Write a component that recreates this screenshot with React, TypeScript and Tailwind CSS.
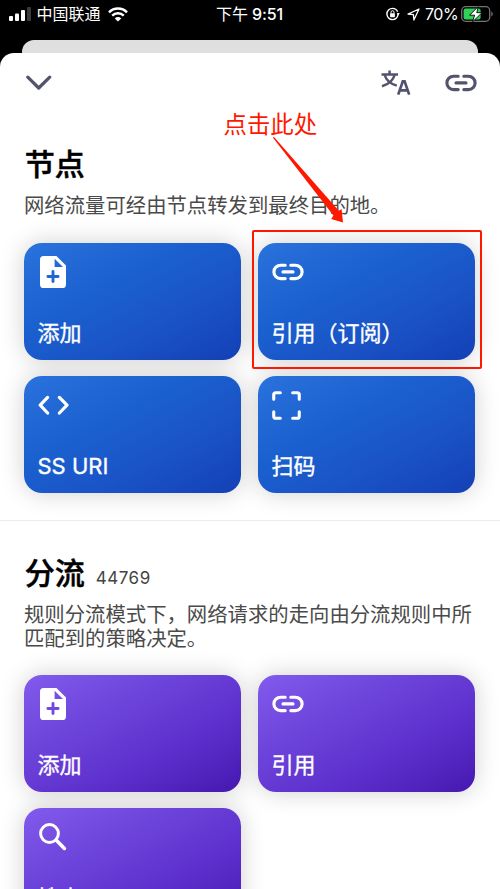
import type { ReactNode } from "react";

const sans = "font-['Inter','Noto_Sans_CJK_SC',sans-serif]";

function LinkIcon({ className }: { className: string }) {
  return (
    <svg viewBox="0 0 32 18" fill="none" stroke="currentColor" strokeWidth="3.1" strokeLinecap="round" className={className}>
      <path d="M13.2 2.2H8.6a6.7 6.7 0 0 0 0 13.4h4.6M18.8 2.2h4.6a6.7 6.7 0 0 1 0 13.4h-4.6M11 8.9h10" />
    </svg>
  );
}

function FileAddIcon({ plus }: { plus: string }) {
  return (
    <svg viewBox="0 0 26 32" className="ml-[2px] h-[32px] w-[26px]">
      <path
        fill="currentColor"
        fillRule="evenodd"
        d="M3.6 0H16.4L26 9.6V28.4Q26 32 22.4 32H3.6Q0 32 0 28.4V3.6Q0 0 3.6 0ZM14.6 2.8V11H23Z"
      />
      <path d="M13 15.4v10.2M7.9 20.5h10.2" className={plus} strokeWidth="2.9" strokeLinecap="round" />
    </svg>
  );
}

function CodeIcon() {
  return (
    <svg viewBox="0 0 32 20" fill="none" stroke="currentColor" strokeWidth="3.2" strokeLinecap="round" strokeLinejoin="round" className="h-[20px] w-[32px]">
      <path d="M9.6 2.4L2.2 10.2l7.4 7.8M21.4 2.4l7.6 7.8-7.6 7.8" />
    </svg>
  );
}

function ScanIcon() {
  return (
    <svg viewBox="0 0 30 30" fill="none" stroke="currentColor" strokeWidth="3.2" strokeLinecap="round" className="mt-px h-[29px] w-[29px]">
      <path d="M1.8 8.6V4Q1.8 1.8 4 1.8H8.6M21.4 1.8H26Q28.2 1.8 28.2 4V8.6M28.2 21.4V26Q28.2 28.2 26 28.2H21.4M8.6 28.2H4Q1.8 28.2 1.8 26V21.4" />
    </svg>
  );
}

function SearchIcon() {
  return (
    <svg viewBox="0 0 28 28" fill="none" stroke="currentColor" strokeLinecap="round" className="ml-[1px] h-[28px] w-[28px]">
      <circle cx="10.5" cy="10.5" r="8.9" strokeWidth="3" />
      <path d="M17.6 17.6L25.4 25.4" strokeWidth="3.6" />
    </svg>
  );
}

function TranslateIcon() {
  return (
    <svg viewBox="0 0 30 26" fill="none" stroke="currentColor" strokeWidth="2.5" className="h-[26px] w-[30px]">
      <path d="M.5 4.6H17M8.6.6V4.6M3.7 5C5.1 10 9.2 13.8 15.8 15.6M13.6 5C12.2 10 8.1 14.2 1 16.2" />
      <path d="M17.2 24.6L21.8 11.4H23.6L28.2 24.6M18.7 20.4H26.7" strokeWidth="2.7" />
    </svg>
  );
}

function StatusBar() {
  return (
    <header className="flex h-[40px] shrink-0 items-start text-[16px] leading-[28px] text-white">
      <div className="flex h-[28px] w-[216px] items-center pl-[9px]">
        <svg viewBox="0 0 22 14" className="h-[14px] w-[22px]" fill="currentColor">
          <rect x="0" y="9" width="4" height="5" rx="1" />
          <rect x="6" y="6.5" width="4" height="7.5" rx="1" />
          <rect x="12" y="3" width="4" height="11" rx="1" />
          <rect x="18" y="0" width="4" height="14" rx="1" fill="#3b3b3b" />
        </svg>
        <span className="-mt-[2px] ml-[5.5px] w-[65.5px] font-['Noto_Sans_CJK_SC',sans-serif]">中国联通</span>
        <svg viewBox="0 0 20 15" className="ml-[6px] h-[15px] w-[20px]" fill="none" stroke="currentColor">
          <path d="M1 5.4A12.6 12.6 0 0 1 19 5.4" strokeWidth="2.5" />
          <path d="M4.2 8.7A8.2 8.2 0 0 1 15.8 8.7" strokeWidth="2.4" />
          <path d="M10 14.6L6.8 11.4A4.6 4.6 0 0 1 13.2 11.4Z" fill="currentColor" stroke="none" />
        </svg>
      </div>
      <div className="-mt-px w-[170px] font-medium tracking-[-0.1px] whitespace-pre">
        <span className="font-['Noto_Sans_CJK_SC',sans-serif] font-normal">下午</span> 9:51
      </div>
      <div className="flex h-[28px] items-center">
        <svg viewBox="0 0 14 14" className="h-[14px] w-[14px]" fill="none" stroke="currentColor">
          <circle cx="6.5" cy="7" r="5.6" strokeWidth="1.4" strokeDasharray="32 3.2" />
          <rect x="4.1" y="6.2" width="4.8" height="4" rx=".6" fill="currentColor" stroke="none" />
          <path d="M5 6.4V5.2a1.5 1.5 0 0 1 3 0v1.2" strokeWidth="1" />
          <path d="M10.6 6h3.2l-1.6 2.4z" fill="currentColor" stroke="none" />
        </svg>
        <svg viewBox="0 0 13 13" className="ml-[7px] h-[13px] w-[13px]" fill="none" stroke="currentColor" strokeWidth="1.3" strokeLinejoin="round">
          <path d="M12 1L1 6.1 6.4 6.6 6.9 12Z" />
        </svg>
        <span className="ml-[5px] w-[35.5px] tracking-[-0.5px]">70%</span>
        <svg viewBox="0 0 32 16" className="h-[16px] w-[32px]" fill="none">
          <rect x=".7" y=".7" width="28" height="14.6" rx="4" stroke="#747474" strokeWidth="1.3" />
          <path d="M30.3 5.6q1.5.7 1.5 2.4t-1.5 2.4z" fill="#747474" />
          <rect x="2.6" y="2.6" width="17" height="10.8" rx="2" fill="#31d158" />
          <path d="M17.2.6L8.6 9.2h5L11.6 15.8 21 6.7H15.8Z" fill="#fff" stroke="#000" strokeWidth=".9" />
        </svg>
      </div>
    </header>
  );
}

const blue =
  "flex h-[117px] flex-col justify-between rounded-[18px] bg-[linear-gradient(152deg,#2a72dc_0%,#1b61d0_36%,#1a53c6_67%,#1440b6_100%)] pt-[13px] pr-4 pb-[13px] pl-[13.5px] text-white shadow-[0_0_24px_rgba(0,0,0,0.19)]";
const purple =
  "flex h-[117px] flex-col justify-between rounded-[18px] bg-[linear-gradient(152deg,#825aec_0%,#6c43da_36%,#5c2fcc_67%,#4519b0_100%)] pt-[13px] pr-4 pb-[13px] pl-[13.5px] text-white shadow-[0_0_24px_rgba(0,0,0,0.19)]";

function Card({ tone, icon, label }: { tone: "blue" | "purple"; icon: ReactNode; label: string }) {
  return (
    <button className={`${tone === "blue" ? blue : purple} text-left`}>
      <span className="flex h-[32px] items-center">{icon}</span>
      <span className="text-[22px] leading-[28px] whitespace-nowrap [-webkit-text-stroke:0.35px_currentColor]">{label}</span>
    </button>
  );
}

export default function App() {
  return (
    <div className={`relative flex h-[889px] w-[500px] flex-col overflow-hidden bg-black ${sans}`} lang="zh-CN">
      <StatusBar />
      <div className="mx-[22px] -mb-[20px] h-[33px] shrink-0 rounded-t-[12px] bg-[#dfdfdf]" />
      <main className="relative h-[860px] shrink-0 rounded-t-[14px] bg-white">
        <nav className="flex h-[60px] items-center pr-[23px] pl-[26px] text-[#54536d]">
          <svg viewBox="0 0 26 16" fill="none" stroke="currentColor" strokeWidth="3.2" strokeLinecap="round" strokeLinejoin="round" className="h-[16px] w-[26px]">
            <path d="M1.8 2.2L12.7 13 23.7 2.2" />
          </svg>
          <span className="ml-auto">
            <TranslateIcon />
          </span>
          <LinkIcon className="ml-[34px] h-[18px] w-[32px]" />
        </nav>

        <section className="h-[408px] border-b border-[#ededed] px-6 pt-[33px]">
          <h1 className="h-[36px] pl-[0.8px] text-[30px] leading-[36px] font-medium text-black [-webkit-text-stroke:0.5px_#000]">节点</h1>
          <p className="mt-[12px] text-[20.38px] leading-[23.5px] whitespace-nowrap text-[#4a4a4a]">
            网络流量可经由节点转发到最终目的地。
          </p>
          <div className="mt-[25px] grid grid-cols-[217px_217px] gap-x-[17px] gap-y-[16px]">
            <Card tone="blue" icon={<FileAddIcon plus="stroke-[#2067d2]" />} label="添加" />
            <Card tone="blue" icon={<LinkIcon className="h-[18px] w-[32px]" />} label="引用（订阅）" />
            <Card tone="blue" icon={<CodeIcon />} label="SS URI" />
            <Card tone="blue" icon={<ScanIcon />} label="扫码" />
          </div>
        </section>

        <section className="px-6 pt-[34px]">
          <div className="flex h-[36px] items-center pl-[0.8px]">
            <h1 className="text-[30px] leading-[36px] font-medium text-black [-webkit-text-stroke:0.5px_#000]">分流</h1>
            <span className="mt-[9px] ml-[11px] text-[17px] leading-[20px] tracking-[0.5px] text-[#444]">44769</span>
          </div>
          <p className="mt-[12px] text-[20.38px] leading-[23.5px] whitespace-nowrap text-[#4a4a4a]">
            规则分流模式下，网络请求的走向由分流规则中所
            <br />
            匹配到的策略决定。
          </p>
          <div className="mt-[25px] grid grid-cols-[217px_217px] gap-x-[17px] gap-y-[16px]">
            <Card tone="purple" icon={<FileAddIcon plus="stroke-[#7448e0]" />} label="添加" />
            <Card tone="purple" icon={<LinkIcon className="h-[18px] w-[32px]" />} label="引用" />
            <Card tone="purple" icon={<SearchIcon />} label="搜索" />
          </div>
        </section>
      </main>

      <span className="absolute top-[108px] left-[223.5px] font-['Noto_Sans_CJK_SC',sans-serif] text-[23.4px] leading-[30px] whitespace-nowrap text-[#ff1800]">
        点击此处
      </span>
      <svg viewBox="0 0 80 90" className="absolute top-[135px] left-[270px] h-[90px] w-[80px]">
        <path d="M2.8 2.6L4 2 68.8 75.8 71.6 74 73 87.5 61.2 84 63.4 80.6Z" fill="#ff1800" />
      </svg>
      <div className="absolute top-[230px] left-[252px] h-[139px] w-[230px] rounded-[2px] border-2 border-[#ff1800]" />
    </div>
  );
}
